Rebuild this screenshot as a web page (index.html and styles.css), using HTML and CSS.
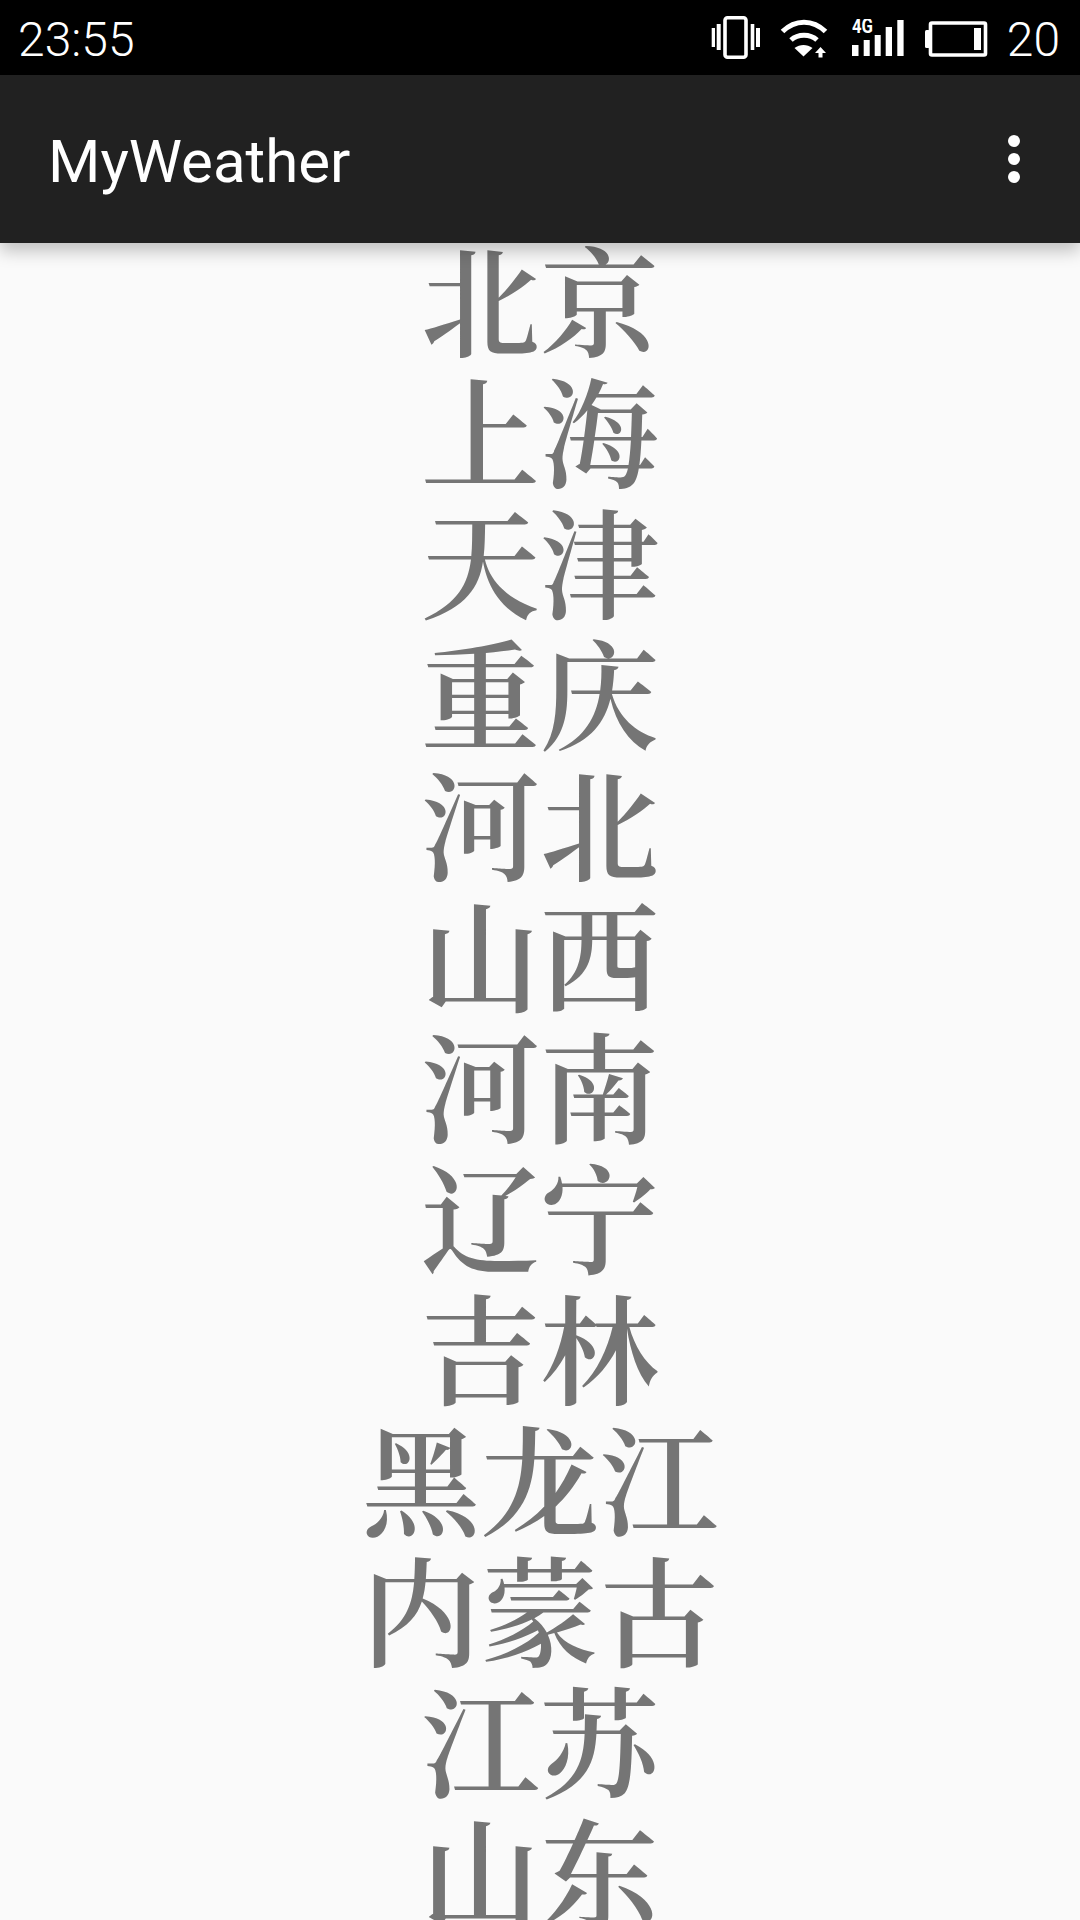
FILE: index.html
```html
<!DOCTYPE html>
<html lang="zh-CN">
<head>
<meta charset="utf-8">
<title>MyWeather</title>
<link rel="stylesheet" href="styles.css">
</head>
<body>
<div class="screen">
  <header class="status">
    <span class="status-text">23:55</span>
    <div class="status-icons">
      <svg class="icon-vibrate" width="49" height="43" viewBox="0 0 49 43" fill="#fff">
        <rect x="14" y="1.8" width="21" height="39.4" rx="2.5" fill="none" stroke="#fff" stroke-width="3.6"/>
        <rect x="0.7" y="12" width="3.3" height="19"/><rect x="5.7" y="8" width="4" height="26"/>
        <rect x="39.7" y="8" width="3.6" height="26"/><rect x="45" y="12" width="4" height="19"/>
      </svg>
      <svg class="icon-wifi" width="48" height="39" viewBox="0 0 48 39" fill="none" stroke="#fff">
        <path d="M2.5 12.5C15 0 33 0 45.5 12.5" stroke-width="5"/>
        <path d="M11 21C18 14.5 30 14.5 37 21" stroke-width="5"/>
        <path d="M23.5 37.5L14.5 29C20 25 27 25 32.5 29Z" fill="#fff" stroke="none"/>
        <path d="M40.5 28L46 34H42.5V38.5H38.5V34H35Z" fill="#fff" stroke="none"/>
      </svg>
      <svg class="icon-signal" width="52" height="38" viewBox="0 0 52 38" fill="#fff">
        <text class="net-label" x="0" y="14" textLength="21" lengthAdjust="spacingAndGlyphs">4G</text>
        <rect x="0" y="26" width="6.5" height="11"/>
        <rect x="11.7" y="21" width="6" height="16"/>
        <rect x="22.7" y="16" width="6" height="21"/>
        <rect x="33.7" y="8" width="6.3" height="29"/>
        <rect x="45.3" y="1" width="6.3" height="36"/>
      </svg>
      <svg class="icon-battery" width="63" height="36" viewBox="0 0 63 36" fill="#fff">
        <rect x="0" y="9" width="5" height="18" rx="1.5"/>
        <rect x="5.5" y="2" width="55" height="32" rx="1.5" fill="none" stroke="#fff" stroke-width="3.6"/>
        <rect x="49" y="7" width="7" height="22"/>
      </svg>
      <span class="status-text battery-level">20</span>
    </div>
  </header>
  <div class="toolbar">
    <h1 class="title">MyWeather</h1>
    <div class="overflow"><i></i><i></i><i></i></div>
  </div>
  <ul class="list">
    <li>北京</li>
    <li>上海</li>
    <li>天津</li>
    <li>重庆</li>
    <li>河北</li>
    <li>山西</li>
    <li>河南</li>
    <li>辽宁</li>
    <li>吉林</li>
    <li>黑龙江</li>
    <li>内蒙古</li>
    <li>江苏</li>
    <li>山东</li>
  </ul>
</div>
</body>
</html>
```
FILE: styles.css
```css
* { box-sizing: border-box; }
html, body { margin: 0; padding: 0; height: 100%; overflow: hidden; background: #fafafa; }
.screen { width: 1080px; height: 1920px; overflow: hidden; display: flex; flex-direction: column; font-family: Roboto, sans-serif; background: #fafafa; }
.status { height: 75px; flex: none; background: #000; color: #fff; display: flex; align-items: center; justify-content: space-between; padding: 0 20px 0 18px; }
.status-text { font-size: 48px; font-weight: 300; line-height: 80px; height: 75px; }
.status-icons { display: flex; align-items: center; }
.icon-vibrate { margin-right: 20px; }
.icon-wifi { margin-right: 24px; margin-top: 2px; }
.icon-signal { margin-right: 21px; }
.icon-battery { margin-right: 19px; margin-top: 2px; }
.net-label { font-family: Roboto, sans-serif; font-weight: 700; font-size: 20px; }
.toolbar { height: 168px; flex: none; background: #212121; color: #fff; display: flex; align-items: center; justify-content: space-between; padding: 0 60px 0 48px; position: relative; z-index: 1; box-shadow: 0 8px 16px rgba(0,0,0,.23); }
.title { margin: 0; font-size: 60px; font-weight: 400; line-height: 66px; height: 60px; }
.overflow { display: flex; flex-direction: column; gap: 6px; }
.overflow i { display: block; width: 12px; height: 12px; border-radius: 50%; background: #fff; }
.list { list-style: none; margin: 0; padding: 0; flex: none; }
.list li { height: 131px; line-height: 108px; text-align: center; font-size: 119px; font-weight: 600; color: #757575; font-family: "Noto Serif CJK SC", "Noto Sans CJK SC", serif; }
```
